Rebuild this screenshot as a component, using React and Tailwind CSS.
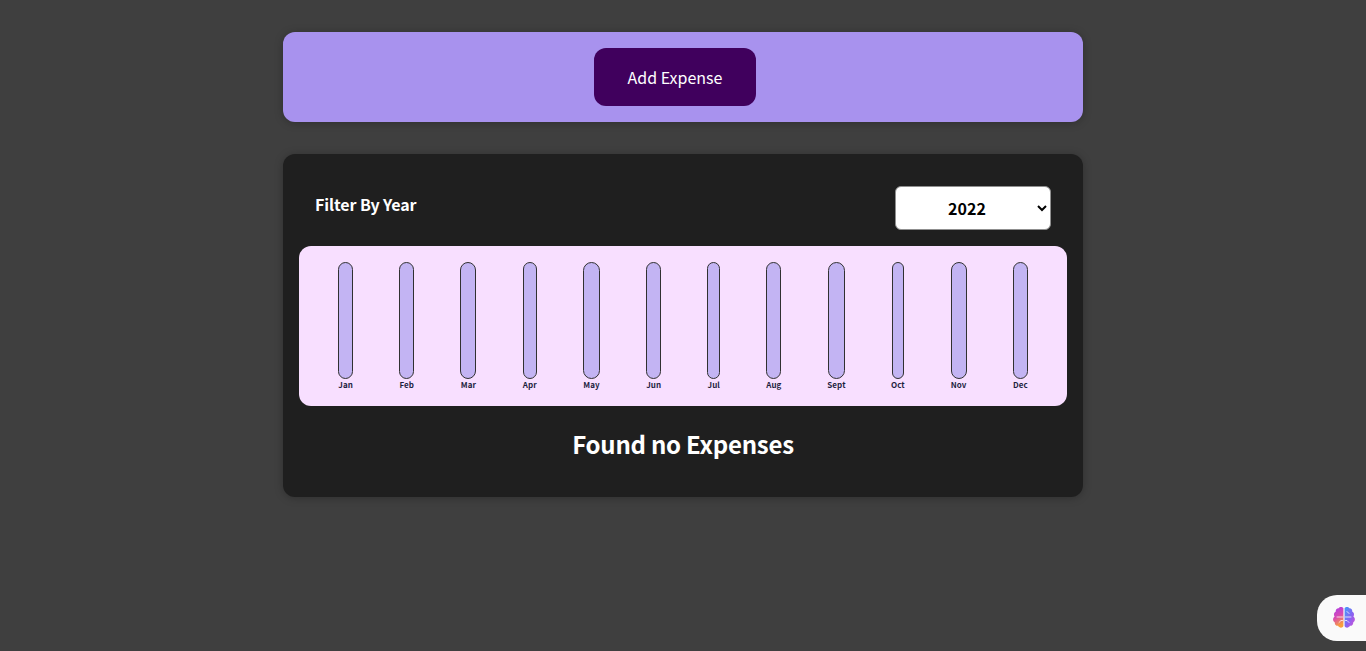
const months = [
  { name: "Jan", width: "w-[14.9px]" },
  { name: "Feb", width: "w-[14.7px]" },
  { name: "Mar", width: "w-[16px]" },
  { name: "Apr", width: "w-[13.94px]" },
  { name: "May", width: "w-[17px]" },
  { name: "Jun", width: "w-[14.8px]" },
  { name: "Jul", width: "w-[12.6px]" },
  { name: "Aug", width: "w-[15px]" },
  { name: "Sept", width: "w-[17.5px]" },
  { name: "Oct", width: "w-[12.7px]" },
  { name: "Nov", width: "w-[16.2px]" },
  { name: "Dec", width: "w-[14.66px]" },
];

const BrainIcon = () => (
  <svg width="26" height="26" viewBox="0 0 26 26" fill="none">
    <defs>
      <linearGradient id="brainLeft" x1="0" y1="0" x2="0.3" y2="1">
        <stop offset="0" stopColor="#a63bf0" />
        <stop offset="0.55" stopColor="#d94bb0" />
        <stop offset="1" stopColor="#f9a03c" />
      </linearGradient>
      <linearGradient id="brainRight" x1="0" y1="0" x2="1" y2="1">
        <stop offset="0" stopColor="#3f9dfb" />
        <stop offset="0.55" stopColor="#8a62f2" />
        <stop offset="1" stopColor="#d94fd0" />
      </linearGradient>
    </defs>
    <path d="M12.4 3.2C11.6 1.6 8.6 1.4 7.6 3.2 5.6 3.2 4.4 4.8 4.8 6.6 2.8 7.6 2.4 10.2 3.6 11.6 1.4 13.2 1.8 16.4 3.8 17.4 3.6 19.6 5.4 21 7 20.8 8 23 11.6 23.4 12.4 21Z" fill="url(#brainLeft)" />
    <path d="M13.6 3.2C14.4 1.6 17.4 1.4 18.4 3.2 20.4 3.2 21.6 4.8 21.2 6.6 23.2 7.6 23.6 10.2 22.4 11.6 24.6 13.2 24.2 16.4 22.2 17.4 22.4 19.6 20.6 21 19 20.8 18 23 14.4 23.4 13.6 21Z" fill="url(#brainRight)" />
    <path d="M6 12H11.5M8 17.5 10 15.5H11.5M14.5 12H20M16 6.5 18 8.5M18 17.5 16 15.5H14.5" stroke="#fff" strokeOpacity="0.75" strokeWidth="1" strokeLinecap="round" strokeLinejoin="round" />
  </svg>
);

const App = () => {
  return (
    <div className="min-h-screen bg-[#3f3f3f] font-['Noto_Sans_CJK_JP','Noto_Sans',sans-serif] overflow-hidden">
      <div className="mx-auto w-[800px] pt-8">
        {/* New expense */}
        <div className="h-[90px] rounded-xl bg-[#a892ee] pt-4 text-center shadow-[0_1px_8px_rgba(0,0,0,0.25)]">
          <button className="mr-4 h-[58px] w-[162px] rounded-xl bg-[#40005d] text-base text-white">
            Add Expense
          </button>
        </div>

        {/* Expenses */}
        <div className="mt-8 h-[343px] rounded-xl bg-[#1f1f1f] px-4 pt-8 shadow-[0_1px_8px_rgba(0,0,0,0.25)]">
          <div className="flex items-center justify-between px-4">
            <label className="mb-2 text-base font-bold tracking-[-0.1px] text-white">Filter By Year</label>
            <select
              defaultValue="2022"
              className="h-11 w-[156px] rounded-md border border-[#8f8f8f] bg-white text-center text-base font-bold text-black appearance-auto"
            >
              <option>2022</option>
              <option>2021</option>
              <option>2020</option>
              <option>2019</option>
            </select>
          </div>

          <div className="mt-4 flex h-40 justify-around rounded-xl bg-[#f8dfff] p-4">
            {months.map((month) => (
              <div key={month.name} className={`flex h-full flex-col items-center ${month.width}`}>
                <div className="min-h-0 w-full flex-1 rounded-xl border border-[#313131] bg-[#c3b4f3]" />
                <div className="mt-[1px] text-center text-[8px] leading-[10px] font-bold tracking-[0.1px] whitespace-nowrap text-[#1f1f3f]">{month.name}</div>
              </div>
            ))}
          </div>

          <h2 className="mt-5 text-center text-2xl leading-9 font-bold tracking-[-0.24px] text-white">Found no Expenses</h2>
        </div>
      </div>

      {/* Floating widget */}
      <div className="fixed right-0 bottom-[10px] flex h-[46px] w-[49px] items-center rounded-l-[20px] bg-[#fafafa] pl-[14px]">
        <BrainIcon />
      </div>
    </div>
  );
};

export default App;
